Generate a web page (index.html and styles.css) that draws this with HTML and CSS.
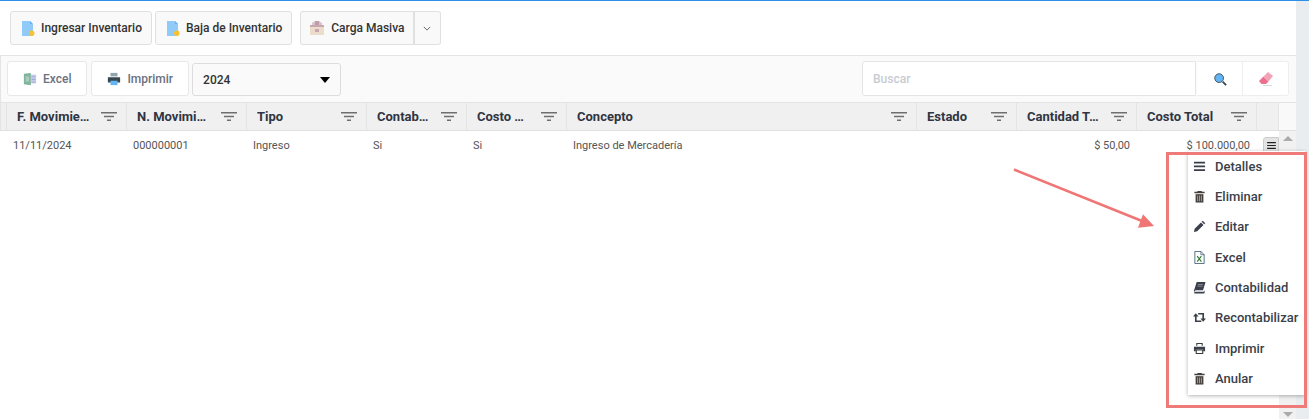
FILE: index.html
```html
<!DOCTYPE html>
<html lang="es">
<head>
<meta charset="utf-8">
<title>Inventario</title>
<link rel="stylesheet" href="styles.css">
</head>
<body>
<div class="page">
  <main class="content">
    <div class="actions">
      <button class="btn"><svg class="ic-doc" viewBox="0 0 14 15"><path fill="#90caf9" d="M1 0h8l3 3v12H1z"/><path fill="#64b5f6" d="M9 0l3 3H9z"/><circle cx="10.7" cy="12.3" r="2.7" fill="#fbc02d"/></svg>Ingresar Inventario</button>
      <button class="btn"><svg class="ic-doc" viewBox="0 0 14 15"><path fill="#90caf9" d="M1 0h8l3 3v12H1z"/><path fill="#64b5f6" d="M9 0l3 3H9z"/><circle cx="10.7" cy="12.3" r="2.7" fill="#fbc02d"/></svg>Baja de Inventario</button>
      <div class="split">
        <button class="btn btn-main"><svg class="ic16" viewBox="0 0 16 16"><path fill="#ecdccb" d="M1 5h14v10H1z"/><path fill="#c9a7b0" d="M1 5h14v2H1zM6 1h4v4H6zM6 9h4v3H6z"/><path fill="#b78f9f" d="M3 3l3-2h4l3 2v2H3z" opacity=".5"/></svg>Carga Masiva</button>
        <button class="btn btn-caret"><svg viewBox="0 0 10 6" class="caret"><path d="M1 1l4 4 4-4" fill="none" stroke="#444" stroke-width="1"/></svg></button>
      </div>
    </div>
    <section class="panel">
      <div class="tools">
        <button class="tool"><svg class="ic-tool" viewBox="0 0 16 16"><path fill="#7fb59a" d="M1 2l8-1v14l-8-1z"/><path fill="#c5cae9" d="M9 3h6v10H9z"/><path fill="#9fa8da" d="M10 5h4v1h-4zM10 8h4v1h-4zM10 11h4v1h-4z"/><path fill="#cfd8dc" d="M3 5h4v6H3z" opacity=".6"/></svg>Excel</button>
        <button class="tool"><svg class="ic-tool" viewBox="0 0 16 16"><path fill="#90a4ae" d="M4 1h8v4H4z"/><path fill="#37474f" d="M1 6h14v6H1z"/><path fill="#64b5f6" d="M4 10h8v5H4z"/></svg>Imprimir</button>
        <div class="select"><span>2024</span><i class="tri"></i></div>
        <div class="search">
          <input class="search-input" placeholder="Buscar">
          <button class="sq"><svg class="ic14" viewBox="0 0 16 16"><circle cx="7" cy="7" r="5" fill="#64b5f6" stroke="#37474f" stroke-width="1"/><path d="M11 11l4 4" stroke="#37474f" stroke-width="2"/></svg></button>
          <button class="sq"><svg class="ic16" viewBox="0 0 16 16"><path fill="#ec6f8f" d="M1 10l4.500-4.500 5 5L8 13H3.500z"/><path fill="#f2a3b6" d="M5.500 5.500L10 1l5 4-4.500 5.500z"/><path fill="#d5dade" d="M5 14h9v1H5z"/></svg></button>
        </div>
      </div>
      <div class="grid-head">
        <div class="gutter"></div>
        <div class="th"><span>F. Movimiento</span><svg class="flt" viewBox="0 0 16 9"><path d="M0 0h16v1.500H0zM3 3.700h10v1.500H3zM6 7.400h4v1.500H6z"/></svg></div>
        <div class="th"><span>N. Movimiento</span><svg class="flt" viewBox="0 0 16 9"><path d="M0 0h16v1.500H0zM3 3.700h10v1.500H3zM6 7.400h4v1.500H6z"/></svg></div>
        <div class="th"><span>Tipo</span><svg class="flt" viewBox="0 0 16 9"><path d="M0 0h16v1.500H0zM3 3.700h10v1.500H3zM6 7.400h4v1.500H6z"/></svg></div>
        <div class="th w100"><span>Contabilizado</span><svg class="flt" viewBox="0 0 16 9"><path d="M0 0h16v1.500H0zM3 3.700h10v1.500H3zM6 7.400h4v1.500H6z"/></svg></div>
        <div class="th w100"><span>Costo Unitario</span><svg class="flt" viewBox="0 0 16 9"><path d="M0 0h16v1.500H0zM3 3.700h10v1.500H3zM6 7.400h4v1.500H6z"/></svg></div>
        <div class="th w350"><span>Concepto</span><svg class="flt" viewBox="0 0 16 9"><path d="M0 0h16v1.500H0zM3 3.700h10v1.500H3zM6 7.400h4v1.500H6z"/></svg></div>
        <div class="th w100"><span>Estado</span><svg class="flt" viewBox="0 0 16 9"><path d="M0 0h16v1.500H0zM3 3.700h10v1.500H3zM6 7.400h4v1.500H6z"/></svg></div>
        <div class="th"><span>Cantidad Total</span><svg class="flt" viewBox="0 0 16 9"><path d="M0 0h16v1.500H0zM3 3.700h10v1.500H3zM6 7.400h4v1.500H6z"/></svg></div>
        <div class="th"><span>Costo Total</span><svg class="flt" viewBox="0 0 16 9"><path d="M0 0h16v1.500H0zM3 3.700h10v1.500H3zM6 7.400h4v1.500H6z"/></svg></div>
        <div class="th-end"></div>
        <div class="th-scroll"></div>
      </div>
      <div class="grid-body">
        <div class="rows">
          <div class="row">
            <div class="gutter-b"></div>
            <div class="td">11/11/2024</div>
            <div class="td">000000001</div>
            <div class="td">Ingreso</div>
            <div class="td w100">Si</div>
            <div class="td w100">Si</div>
            <div class="td w350">Ingreso de Mercadería</div>
            <div class="td w100"></div>
            <div class="td num">$ 50,00</div>
            <div class="td num">$ 100.000,00</div>
            <div class="td-act"><button class="menu-btn"><svg viewBox="0 0 10 8" class="ham"><path d="M0 0h10v1.400H0zM0 3.300h10v1.400H0zM0 6.600h10V8H0z"/></svg></button></div>
          </div>
        </div>
        <div class="scrollbar"><i class="up"></i><i class="down"></i></div>
      </div>
    </section>
  </main>
  <aside class="rail"></aside>

  <svg class="arrow" viewBox="0 0 143 61"><path d="M1 .5L129 52" stroke="#f07676" stroke-width="2.600" fill="none"/><path d="M141 57L125 58.700L130 45.300z" fill="#f07676"/></svg>
  <ul class="menu">
    <li><svg class="mi" viewBox="0 0 14 14"><path fill="#3a3f4a" d="M1 2h12v1.800H1zM1 6h12v1.800H1zM1 10h12v1.800H1z"/></svg>Detalles</li>
    <li><svg class="mi" viewBox="0 0 14 14"><path fill="#43403f" d="M5 1h4l1 1h2.500v1.500h-11V2h3z"/><path fill="#43403f" d="M2.800 4.500h8.400V13.500H2.800z"/><path fill="#c79a74" d="M4.500 6h1v6h-1zM6.500 6h1v6h-1zM8.500 6h1v6h-1z"/></svg>Eliminar</li>
    <li><svg class="mi" viewBox="0 0 14 14"><path fill="#3a3f4a" d="M1 13l.8-3.500 6.800-6.800 2.700 2.700-6.800 6.800zM9.300 2l1.200-1.200 2.700 2.700-1.200 1.200z"/></svg>Editar</li>
    <li><svg class="mi" viewBox="0 0 14 14"><path fill="#fff" stroke="#37596b" stroke-width=".9" d="M2 .5h6.500L12 4v9.500H2z"/><path fill="none" stroke="#37596b" stroke-width=".8" d="M8.500.5V4H12"/><path fill="none" stroke="#2e7d32" stroke-width="1.200" d="M4.500 5.500l4.500 6M9 5.500l-4.500 6"/></svg>Excel</li>
    <li><svg class="mi" viewBox="0 0 14 14"><path fill="#3a3f4a" d="M4 1h9.500l-2.700 9H2.700L1 12.200V10.500z"/><path fill="#3a3f4a" d="M1.200 12.800q.3-1.300 1.800-1.300h8.800l1.200-1.500-.8 3.500H2.400q-1 0-1.200-.7z"/><path fill="#9aa0aa" d="M5.200 3.500h5.500v.7H5.200zM4.800 5.200h5.500v.7H4.800z"/></svg>Contabilidad</li>
    <li><svg class="mi" viewBox="0 0 14 14"><path fill="none" stroke="#3a3f4a" stroke-width="1.800" d="M3 5v6h6M5.500 3H11v6"/><path fill="#3a3f4a" d="M0 6l3-3.500L6 6zM8 8h6l-3 3.500z"/></svg>Recontabilizar</li>
    <li><svg class="mi" viewBox="0 0 14 14"><path fill="#3a3f4a" d="M3.500 1h7v3h-1.200V2.200H4.700V4H3.500zM1 5h12v5h-2V8H3v2H1z"/><path fill="none" stroke="#3f3a38" stroke-width="1.200" d="M3.500 8.600h7v3.800h-7z"/></svg>Imprimir</li>
    <li><svg class="mi" viewBox="0 0 14 14"><path fill="#43403f" d="M5 1h4l1 1h2.500v1.500h-11V2h3z"/><path fill="#43403f" d="M2.800 4.500h8.400V13.500H2.800z"/><path fill="#c79a74" d="M4.500 6h1v6h-1zM6.500 6h1v6h-1zM8.500 6h1v6h-1z"/></svg>Anular</li>
  </ul>
  <div class="mark"></div>
</div>
</body>
</html>
```
FILE: styles.css
```css
* { box-sizing: border-box; }
html, body { margin: 0; height: 100%; overflow: hidden; }
body { font-family: Roboto, "Liberation Sans", sans-serif; color: #333; background: #fff; }
button, input { font-family: inherit; }
.page { position: relative; width: 1309px; height: 419px; display: flex; border-top: 1px solid #2e8fe8; overflow: hidden; }
.content { width: 1296px; flex: none; display: flex; flex-direction: column; }
.rail { flex: 1; background: #e9edf0; }
.actions { height: 54px; flex: none; padding: 10px; display: flex; gap: 3px; align-items: flex-start; }
.btn { height: 34px; padding: 0 9px 0 10px; display: flex; align-items: center; gap: 6px; background: #f9f9f9; border: 1px solid #e0e0e0; border-radius: 3px; font-size: 12px; font-weight: 500; color: #333; white-space: nowrap; }
.ic-doc { width: 14px; height: 15px; flex: none; }
.ic16 { width: 16px; height: 16px; flex: none; }
.ic14 { width: 14px; height: 14px; }
.ic-tool { width: 14px; height: 14px; flex: none; }
.split { display: flex; margin-left: 5px; }
.btn-main { padding: 0 8px; border-radius: 3px 0 0 3px; border-right-width: 2px; }
.btn-caret { width: 26px; padding: 0; justify-content: center; border-left: 0; border-radius: 0 3px 3px 0; }
.caret { width: 8px; height: 5px; }
.panel { flex: 1; display: flex; flex-direction: column; border-top: 1px solid #e4e4e4; min-height: 0; }
.tools { height: 46px; flex: none; padding: 5px 7px 0 6px; background: #fafafa; border-left: 1px solid #e4e4e4; display: flex; align-items: flex-start; gap: 3px; }
.tool { height: 35px; display: flex; align-items: center; gap: 6px; padding: 0 15px; background: #fff; border: 1px solid #e8e8e8; border-radius: 3px; font-size: 12px; font-weight: 500; color: #6b7280; }
.tool + .tool { margin-left: 1px; }
.select { width: 149px; height: 33px; margin-top: 2px; padding: 0 10px; display: flex; align-items: center; justify-content: space-between; border: 1px solid #ddd; border-radius: 3px; background: #fafafa; font-size: 12px; font-weight: 500; color: #333; }
.tri { border: 5px solid transparent; border-top: 6px solid #000; border-bottom: 0; }
.search { margin-left: auto; display: flex; }
.search-input { width: 334px; height: 35px; margin-right: 1px; padding: 0 10px; border: 1px solid #e4e4e4; border-radius: 3px 0 0 3px; font-size: 12px; font-weight: 500; outline: 0; background: #fff; }
.search-input::placeholder { color: #c8ccd2; }
.sq { width: 46px; height: 35px; display: flex; align-items: center; justify-content: center; background: #fff; border: 1px solid #eee; border-left: 0; }
.sq:last-child { border-radius: 0 3px 3px 0; }
.grid-head { height: 29px; flex: none; display: flex; background: #f0f0f0; border-top: 1px solid #e4e4e4; border-bottom: 1px solid #e0e0e0; border-left: 1px solid #e4e4e4; }
.gutter { width: 6px; flex: none; border-right: 1px solid #e4e4e4; }
.th { width: 120px; flex: none; padding: 0 9px 0 10px; display: flex; align-items: center; justify-content: space-between; gap: 9px; border-right: 1px solid #e4e4e4; font-size: 13px; font-weight: 700; color: #2f3542; }
.th span { overflow: hidden; white-space: nowrap; text-overflow: ellipsis; }
.th.w100 span { max-width: 53px; margin-right: auto; }
.flt { width: 16px; height: 9px; flex: none; fill: #6f6f6f; }
.th-end { width: 22px; flex: none; border-right: 1px solid #e4e4e4; }
.th-scroll { flex: 1; background: #f9f9f9; }
.grid-body { flex: 1; display: flex; background: #fff; min-height: 0; }
.rows { width: 1279px; flex: none; }
.row { height: 28px; display: flex; align-items: center; font-size: 11px; color: #555; }
.gutter-b { width: 7px; flex: none; }
.td { width: 120px; flex: none; padding: 0 6px; white-space: nowrap; }
.num { text-align: right; padding-right: 7px; }
.w100 { width: 100px; }
.w350 { width: 350px; }
.td-act { width: 22px; flex: none; display: flex; justify-content: flex-end; }
.menu-btn { width: 16px; height: 16px; padding: 0; display: flex; align-items: center; justify-content: center; background: #e4e4e4; border: 1px solid #ccc; border-radius: 3px 0 0 0; }
.ham { width: 9px; height: 7px; fill: #222; }
.scrollbar { flex: 1; position: relative; background: #f1f1f1; }
.up, .down { position: absolute; left: 4px; border: 5px solid transparent; }
.up { top: 5px; border-bottom: 5px solid #aaa; border-top: 0; }
.down { bottom: 2px; border-top: 5px solid #aaa; border-bottom: 0; }
.arrow { position: absolute; left: 1013px; top: 168px; width: 143px; height: 61px; overflow: visible; }
.mark { position: absolute; left: 1166px; top: 151px; width: 141px; height: 256px; border: 3px solid #ef7a7a; }
.menu { position: absolute; left: 1188px; top: 150px; width: 117px; height: 244px; margin: 0; padding: 0 0 0 5px; list-style: none; background: #fff; box-shadow: 0 1px 4px rgba(0,0,0,.3); }
.menu li { height: 30.36px; display: flex; align-items: center; gap: 9px; font-size: 13px; font-weight: 500; color: #3a3f4a; white-space: nowrap; }
.mi { width: 13px; height: 13px; flex: none; }
```
